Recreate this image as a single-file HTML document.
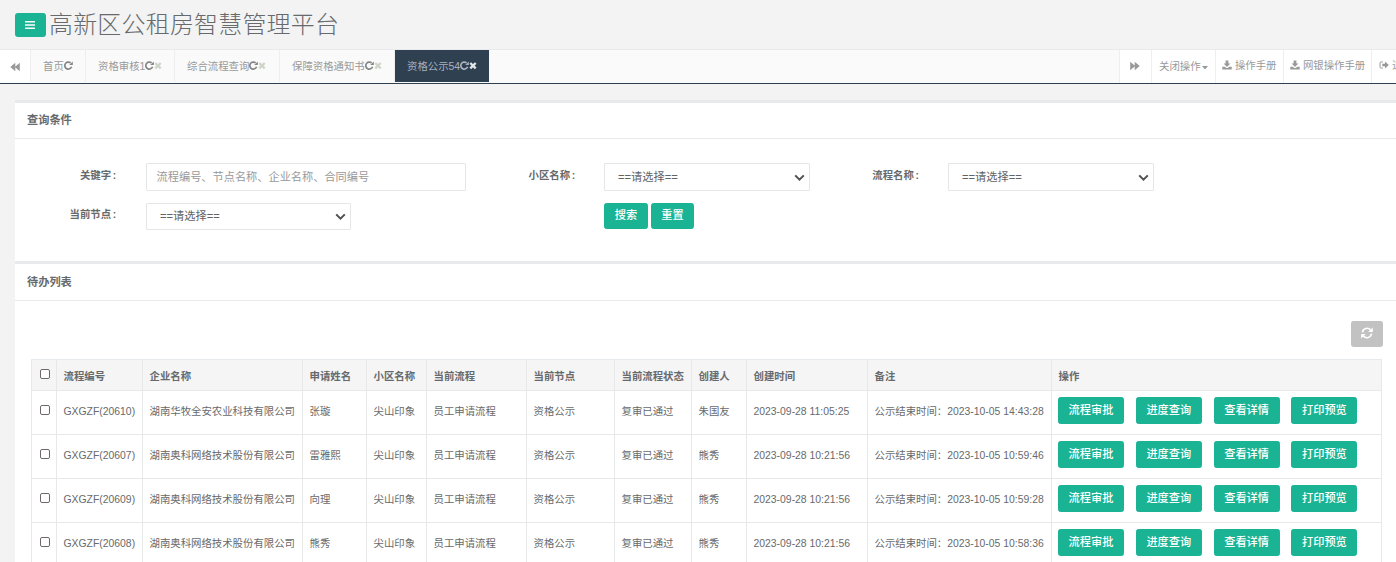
<!DOCTYPE html>
<html lang="zh-CN">
<head>
<meta charset="utf-8">
<title>高新区公租房智慧管理平台</title>
<style>
*{box-sizing:border-box;margin:0;padding:0}
html,body{width:1396px;height:562px;overflow:hidden;background:#f3f3f4}
body{font-family:"Liberation Sans","Noto Sans CJK SC",sans-serif;font-size:10.4px;color:#676a6c;position:relative}
.abs{position:absolute}
svg{display:block}
/* header */
#hdr{left:0;top:0;width:1396px;height:50px;background:#f3f3f4;border-bottom:1px solid #e7eaec}
#menu{left:15px;top:13px;width:31px;height:24px;background:#1ab394;border-radius:3px}
#title{left:49px;top:8px;font-size:24px;line-height:34px;font-weight:300;color:#676a6c;white-space:nowrap;letter-spacing:.18px}
/* tab bar */
#tabs{left:0;top:50px;width:1396px;height:33px;background:#fafafa}
#tabline{left:0;top:83px;width:1396px;height:1px;background:#2f4050}
.tab{top:0;height:32px;line-height:34px;border-right:1px solid #eee;color:#999;white-space:nowrap;padding-left:12px;font-size:10.4px}
.tab svg{display:inline-block;vertical-align:0}
.tab.active{background:#2f4050;color:#a7b1c2;border-right:none}
.rbtn{top:0;height:33px;line-height:32px;background:#fff;border-left:1px solid #eee;color:#999;white-space:nowrap;font-size:10.4px}
.rbtn svg{display:inline-block;vertical-align:-1px}
/* panels */
.ibox-top{left:15px;width:1381px;height:3px;background:#e7eaec}
.ibox{left:15px;width:1381px;background:#fff}
.ibox-line{left:15px;width:1381px;height:1px;background:#e7eaec}
.h5{font-size:11.2px;font-weight:bold;color:#676a6c;line-height:14px;white-space:nowrap}
.lbl{font-size:10.4px;font-weight:bold;color:#676a6c;line-height:14px;white-space:nowrap;text-align:right;width:80.2px}
.co{margin-left:1.6px}
.ctl{border:1px solid #e5e6e7;background:#fff;height:28px;font-size:11.2px;line-height:26px;white-space:nowrap;border-radius:1px}
.ctl.ph{color:#999;padding-left:9.6px}
.ctl.sel{color:#636363;padding-left:13px}
.ctl svg{position:absolute}
.btn{font-weight:500;background:#1ab394;color:#fff;border-radius:2.4px;text-align:center;font-size:11.2px;white-space:nowrap;border:1px solid #1ab394}
/* table */
table{border-collapse:separate;border-spacing:0;table-layout:fixed;font-size:10.4px;color:#676a6c}
th,td{border-left:1px solid #e7e8ea;border-top:1px solid #e7e8ea;padding:0 0 0 6.5px;line-height:14px;text-align:left;vertical-align:middle;white-space:nowrap;overflow:hidden}
th{background:#f5f5f6;font-weight:bold;height:31px;border-top:1px solid #e7eaec;padding-top:3px}
td{height:44px;background:#fff;padding-bottom:2px}
th:last-child,td:last-child{border-right:1px solid #e7e8ea}
.cb{display:block;width:10px;height:10px;border:1px solid #6f686b;border-radius:2px;background:#fff;margin-left:1.5px;position:relative;top:-2px}
th .cb{top:-2.5px}
td .btn{display:inline-block;width:66px;height:27px;line-height:25px;margin-right:11.8px;vertical-align:top;font-weight:500}
td:last-child{padding:6px 0 0 6px;vertical-align:top}
</style>
</head>
<body>
<!-- header -->
<div id="hdr" class="abs"></div>
<div id="menu" class="abs">
  <svg class="abs" style="left:10px;top:8px" width="10" height="8" viewBox="0 0 10 8"><rect x="0" y="0" width="10" height="1.6" rx=".4" fill="#fff"/><rect x="0" y="3.2" width="10" height="1.6" rx=".4" fill="#fff"/><rect x="0" y="6.4" width="10" height="1.6" rx=".4" fill="#fff"/></svg>
</div>
<div id="title" class="abs">高新区公租房智慧管理平台</div>

<!-- tab bar -->
<div id="tabs" class="abs">
  <div class="abs" style="left:0;top:0;width:31px;height:32px;background:#fff;border-right:1px solid #eee">
    <svg class="abs" style="left:10px;top:11.600px" width="10" height="10" viewBox="0 0 10 10"><path d="M5.300 0.700v8.600L0.300 5zM9.800 0.700v8.600L4.800 5z" fill="#999"/></svg>
  </div>
  <div class="tab abs" style="left:31px;width:55px">首页<svg width="9" height="9" viewBox="0 0 9 9"><path d="M6.600 1.900A3.500 3.500 0 1 0 7.600 5.800" fill="none" stroke="#858585" stroke-width="1.700"/><path d="M8.800 0.500v3.600H5.200z" fill="#858585"/></svg></div>
  <div class="tab abs" style="left:86px;width:89px">资格审核1<svg width="9" height="9" viewBox="0 0 9 9"><path d="M6.600 1.900A3.500 3.500 0 1 0 7.600 5.800" fill="none" stroke="#858585" stroke-width="1.700"/><path d="M8.800 0.500v3.600H5.200z" fill="#858585"/></svg><svg width="8" height="9" viewBox="0 0 8 9"><path d="M1.300 2l5.400 5.400M6.700 2L1.300 7.400" stroke="#cfd5c9" stroke-width="2.300"/></svg></div>
  <div class="tab abs" style="left:175px;width:105px">综合流程查询<svg width="9" height="9" viewBox="0 0 9 9"><path d="M6.600 1.900A3.500 3.500 0 1 0 7.600 5.800" fill="none" stroke="#858585" stroke-width="1.700"/><path d="M8.800 0.500v3.600H5.200z" fill="#858585"/></svg><svg width="8" height="9" viewBox="0 0 8 9"><path d="M1.300 2l5.400 5.400M6.700 2L1.300 7.400" stroke="#cfd5c9" stroke-width="2.300"/></svg></div>
  <div class="tab abs" style="left:280px;width:115px">保障资格通知书<svg width="9" height="9" viewBox="0 0 9 9"><path d="M6.600 1.900A3.500 3.500 0 1 0 7.600 5.800" fill="none" stroke="#858585" stroke-width="1.700"/><path d="M8.800 0.500v3.600H5.200z" fill="#858585"/></svg><svg width="8" height="9" viewBox="0 0 8 9"><path d="M1.300 2l5.400 5.400M6.700 2L1.300 7.400" stroke="#cfd5c9" stroke-width="2.300"/></svg></div>
  <div class="tab active abs" style="left:395px;width:94px">资格公示54<svg width="9" height="9" viewBox="0 0 9 9"><path d="M6.600 1.900A3.500 3.500 0 1 0 7.600 5.800" fill="none" stroke="#a7b1c2" stroke-width="1.700"/><path d="M8.800 0.500v3.600H5.200z" fill="#a7b1c2"/></svg><svg width="8" height="9" viewBox="0 0 8 9"><path d="M1.300 2l5.400 5.400M6.700 2L1.300 7.400" stroke="#e4e7ec" stroke-width="2.300"/></svg></div>

  <div class="rbtn abs" style="left:1119px;width:33px">
    <svg class="abs" style="left:10px;top:11.400px" width="10" height="10" viewBox="0 0 10 10"><path d="M0.200 0.700v8.600L5.200 5zM4.700 0.700v8.600L9.700 5z" fill="#999"/></svg>
  </div>
  <div class="rbtn abs" style="left:1151px;width:64px;padding-left:7px;line-height:34px">关闭操作<svg width="6" height="3.500" viewBox="0 0 6 3.500" style="vertical-align:1px;margin-left:1.500px"><path d="M0 0h6L3 3.500z" fill="#999"/></svg></div>
  <div class="rbtn abs" style="left:1215px;width:68px;padding-left:6px"><svg width="10" height="10" viewBox="0 0 10 10"><path d="M3.600 0.500h2.800v3h2L5 7 1.600 3.500h2z" fill="#999"/><path d="M0.300 6.800h2.500l1.400 1.300h1.600l1.400-1.300h2.500v2.700H0.300z" fill="#999"/></svg> 操作手册</div>
  <div class="rbtn abs" style="left:1283px;width:88px;padding-left:6px"><svg width="10" height="10" viewBox="0 0 10 10"><path d="M3.600 0.500h2.800v3h2L5 7 1.600 3.500h2z" fill="#999"/><path d="M0.300 6.800h2.500l1.400 1.300h1.600l1.400-1.300h2.500v2.700H0.300z" fill="#999"/></svg> 网银操作手册</div>
  <div class="rbtn abs" style="left:1371px;width:60px;padding-left:6px"><svg width="10" height="10" viewBox="0 0 10 10" style="margin-left:1px"><path d="M3.800 1.900H2.200Q1 1.900 1 3.100v3.800Q1 8.100 2.200 8.100H3.800" fill="none" stroke="#999" stroke-width="1"/><path d="M6 1.400L9.800 5 6 8.600V6.300H3.300V3.700H6z" fill="#999"/></svg> 退出</div>
</div>
<div id="tabline" class="abs"></div>

<!-- ibox 1 -->
<div class="ibox-top abs" style="top:100px"></div>
<div class="ibox abs" style="top:103px;height:158px"></div>
<div class="ibox-line abs" style="top:138px"></div>
<div class="h5 abs" style="left:27px;top:113px">查询条件</div>

<div class="lbl abs" style="left:36px;top:169px">关键字<span class="co">:</span></div>
<div class="ctl ph abs" style="left:146px;top:163px;width:320px">流程编号、节点名称、企业名称、合同编号</div>
<div class="lbl abs" style="left:495px;top:169px">小区名称<span class="co">:</span></div>
<div class="ctl sel abs" style="left:604px;top:163px;width:206px">==请选择==<svg style="right:4px;top:10px" width="11" height="8" viewBox="0 0 11 8"><path d="M1.200 1.400L5.500 5.700 9.800 1.400" fill="none" stroke="#505050" stroke-width="2"/></svg></div>
<div class="lbl abs" style="left:838.7px;top:169px">流程名称<span class="co">:</span></div>
<div class="ctl sel abs" style="left:948px;top:163px;width:206px">==请选择==<svg style="right:4px;top:10px" width="11" height="8" viewBox="0 0 11 8"><path d="M1.200 1.400L5.500 5.700 9.800 1.400" fill="none" stroke="#505050" stroke-width="2"/></svg></div>
<div class="lbl abs" style="left:36px;top:208px">当前节点<span class="co">:</span></div>
<div class="ctl sel abs" style="left:146px;top:203px;width:205px;height:27px;line-height:25px">==请选择==<svg style="right:4px;top:9px" width="11" height="8" viewBox="0 0 11 8"><path d="M1.200 1.400L5.500 5.700 9.800 1.400" fill="none" stroke="#505050" stroke-width="2"/></svg></div>
<div class="btn abs" style="left:604px;top:203px;width:44px;height:26px;line-height:22px">搜索</div>
<div class="btn abs" style="left:651px;top:203px;width:43px;height:26px;line-height:22px">重置</div>

<!-- ibox 2 -->
<div class="ibox-top abs" style="top:261px"></div>
<div class="ibox abs" style="top:264px;height:298px"></div>
<div class="ibox-line abs" style="top:300px"></div>
<div class="h5 abs" style="left:27px;top:275px">待办列表</div>

<div class="abs" style="left:1351px;top:321px;width:32px;height:26px;background:#c2c2c2;border-radius:2.4px">
  <svg class="abs" style="left:9.900px;top:5.500px" width="12" height="12" viewBox="0 0 12 12"><path d="M1.500 5.300A4.600 4.600 0 0 1 9.600 3" fill="none" stroke="#fff" stroke-width="1.600"/><path d="M11.800 0.400v4.600H7.200z" fill="#fff"/><path d="M10.500 6.700A4.600 4.600 0 0 1 2.400 9" fill="none" stroke="#fff" stroke-width="1.600"/><path d="M0.200 11.600V7h4.600z" fill="#fff"/></svg>
</div>

<table class="abs" style="left:31px;top:359px;width:1351px">
<colgroup><col style="width:25px"><col style="width:86px"><col style="width:160px"><col style="width:64px"><col style="width:60px"><col style="width:100px"><col style="width:88px"><col style="width:77px"><col style="width:55px"><col style="width:121px"><col style="width:184px"><col style="width:331px"></colgroup>
<thead><tr><th><span class="cb"></span></th><th>流程编号</th><th>企业名称</th><th>申请姓名</th><th>小区名称</th><th>当前流程</th><th>当前节点</th><th>当前流程状态</th><th>创建人</th><th>创建时间</th><th>备注</th><th>操作</th></tr></thead>
<tbody>
<tr><td><span class="cb"></span></td><td>GXGZF(20610)</td><td>湖南华牧全安农业科技有限公司</td><td>张璇</td><td>尖山印象</td><td>员工申请流程</td><td>资格公示</td><td>复审已通过</td><td>朱国友</td><td>2023-09-28 11:05:25</td><td>公示结束时间：2023-10-05 14:43:28</td><td><span class="btn">流程审批</span><span class="btn">进度查询</span><span class="btn">查看详情</span><span class="btn">打印预览</span></td></tr>
<tr><td><span class="cb"></span></td><td>GXGZF(20607)</td><td>湖南奥科网络技术股份有限公司</td><td>雷雅熙</td><td>尖山印象</td><td>员工申请流程</td><td>资格公示</td><td>复审已通过</td><td>熊秀</td><td>2023-09-28 10:21:56</td><td>公示结束时间：2023-10-05 10:59:46</td><td><span class="btn">流程审批</span><span class="btn">进度查询</span><span class="btn">查看详情</span><span class="btn">打印预览</span></td></tr>
<tr><td><span class="cb"></span></td><td>GXGZF(20609)</td><td>湖南奥科网络技术股份有限公司</td><td>向理</td><td>尖山印象</td><td>员工申请流程</td><td>资格公示</td><td>复审已通过</td><td>熊秀</td><td>2023-09-28 10:21:56</td><td>公示结束时间：2023-10-05 10:59:28</td><td><span class="btn">流程审批</span><span class="btn">进度查询</span><span class="btn">查看详情</span><span class="btn">打印预览</span></td></tr>
<tr><td><span class="cb"></span></td><td>GXGZF(20608)</td><td>湖南奥科网络技术股份有限公司</td><td>熊秀</td><td>尖山印象</td><td>员工申请流程</td><td>资格公示</td><td>复审已通过</td><td>熊秀</td><td>2023-09-28 10:21:56</td><td>公示结束时间：2023-10-05 10:58:36</td><td><span class="btn">流程审批</span><span class="btn">进度查询</span><span class="btn">查看详情</span><span class="btn">打印预览</span></td></tr>
</tbody>
</table>
</body>
</html>
